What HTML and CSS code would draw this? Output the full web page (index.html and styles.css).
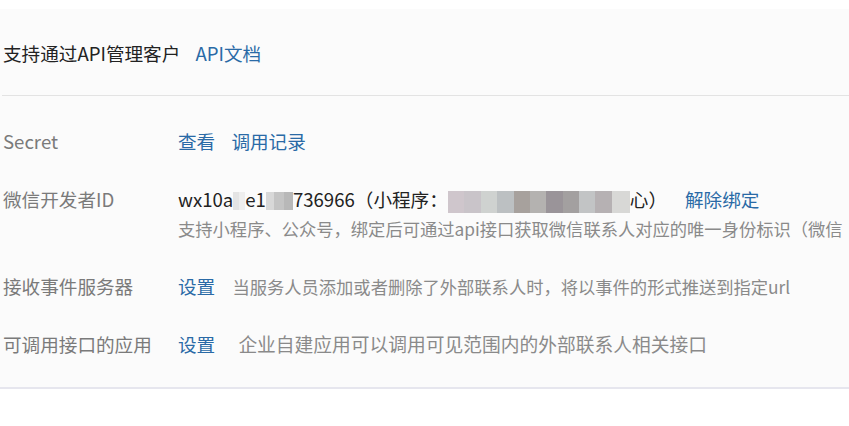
FILE: index.html
```html
<!DOCTYPE html>
<html>
<head>
    <title>API管理客户</title>
    <link rel="stylesheet" href="styles.css">
</head>
<body>
    <div class="panel">
        <div class="panel-head">
            <span class="head-title">支持通过API管理客户</span>
            <a class="link head-link">API文档</a>
        </div>
        <div class="rows">
            <div class="row">
                <div class="label">Secret</div>
                <div class="value">
                    <a class="link">查看</a>
                    <a class="link link-gap">调用记录</a>
                </div>
            </div>
            <div class="row">
                <div class="label">微信开发者ID</div>
                <div class="value">
                    <div class="dark">wx10a<span class="mosaic m1"></span>e1<span class="mosaic m2"></span>736966（小程序：<span class="mosaic m3"></span>心）<a class="link unbind">解除绑定</a></div>
                    <div class="desc small">支持小程序、公众号，绑定后可通过api接口获取微信联系人对应的唯一身份标识（微信</div>
                </div>
            </div>
            <div class="row">
                <div class="label">接收事件服务器</div>
                <div class="value">
                    <a class="link">设置</a>
                    <span class="desc small note">当服务人员添加或者删除了外部联系人时，将以事件的形式推送到指定url</span>
                </div>
            </div>
            <div class="row">
                <div class="label">可调用接口的应用</div>
                <div class="value">
                    <a class="link">设置</a>
                    <span class="desc note wide">企业自建应用可以调用可见范围内的外部联系人相关接口</span>
                </div>
            </div>
        </div>
    </div>
</body>
</html>
```

FILE: styles.css
```css
body {
    margin: 0;
    padding-top: 9px;
    background: #ffffff;
    font-family: "Noto Sans CJK SC", sans-serif;
    font-size: 18.6px;
    color: #222222;
    overflow: hidden;
}

.panel {
    background: #fbfbfb;
    border-bottom: 2px solid #e6e6ee;
    padding-bottom: 30px;
}

.panel-head {
    padding: 31px 0 29px 3px;
    line-height: 26px;
    margin-left: 2px;
    border-bottom: 1px solid #e3e3e3;
    white-space: nowrap;
}

.panel-head .head-title {
    margin-left: -2px;
    color: #222222;
}

.head-link {
    margin-left: 11px;
}

.rows {
    padding: 32px 0 0 3px;
    display: flex;
    flex-direction: column;
    gap: 32px;
}

.row {
    display: grid;
    grid-template-columns: 175px 1fr;
    line-height: 26px;
    white-space: nowrap;
}

.label {
    color: #7a7a7a;
}

.link {
    color: #2a6aa6;
    cursor: pointer;
}

.link-gap {
    margin-left: 12px;
}

.dark {
    color: #222222;
}

.unbind {
    margin-left: 18px;
}

.desc {
    color: #8a8a8a;
}

.small {
    font-size: 17.3px;
    line-height: 24px;
    margin-top: 4px;
}

.note {
    margin-left: 13px;
    margin-top: 0;
}

.note.wide {
    margin-left: 19px;
    font-size: 18.75px;
}

.mosaic {
    display: inline-block;
    height: 18px;
    vertical-align: -3px;
}

.m1 {
    width: 12px;
    background: linear-gradient(90deg, #e4e4e4 0 50%, #eeeeee 50% 100%);
}

.m2 {
    width: 27px;
    background: linear-gradient(90deg, #d8d8d8 0 30%, #c4c4c4 30% 65%, #b8b8b8 65% 100%);
}

.m3 {
    width: 182px;
    height: 22px;
    vertical-align: -6px;
    background: linear-gradient(90deg, #cfc6cc 0 9%, #c9c4c9 9% 18%, #cfd2d0 18% 27%, #bcc0c2 27% 36%, #a7a19d 36% 45%, #b4b2b0 45% 54%, #9a9499 54% 63%, #a3a0a0 63% 72%, #c2c4c5 72% 81%, #b6b1b3 81% 90%, #d8d8d6 90% 100%);
}
```
